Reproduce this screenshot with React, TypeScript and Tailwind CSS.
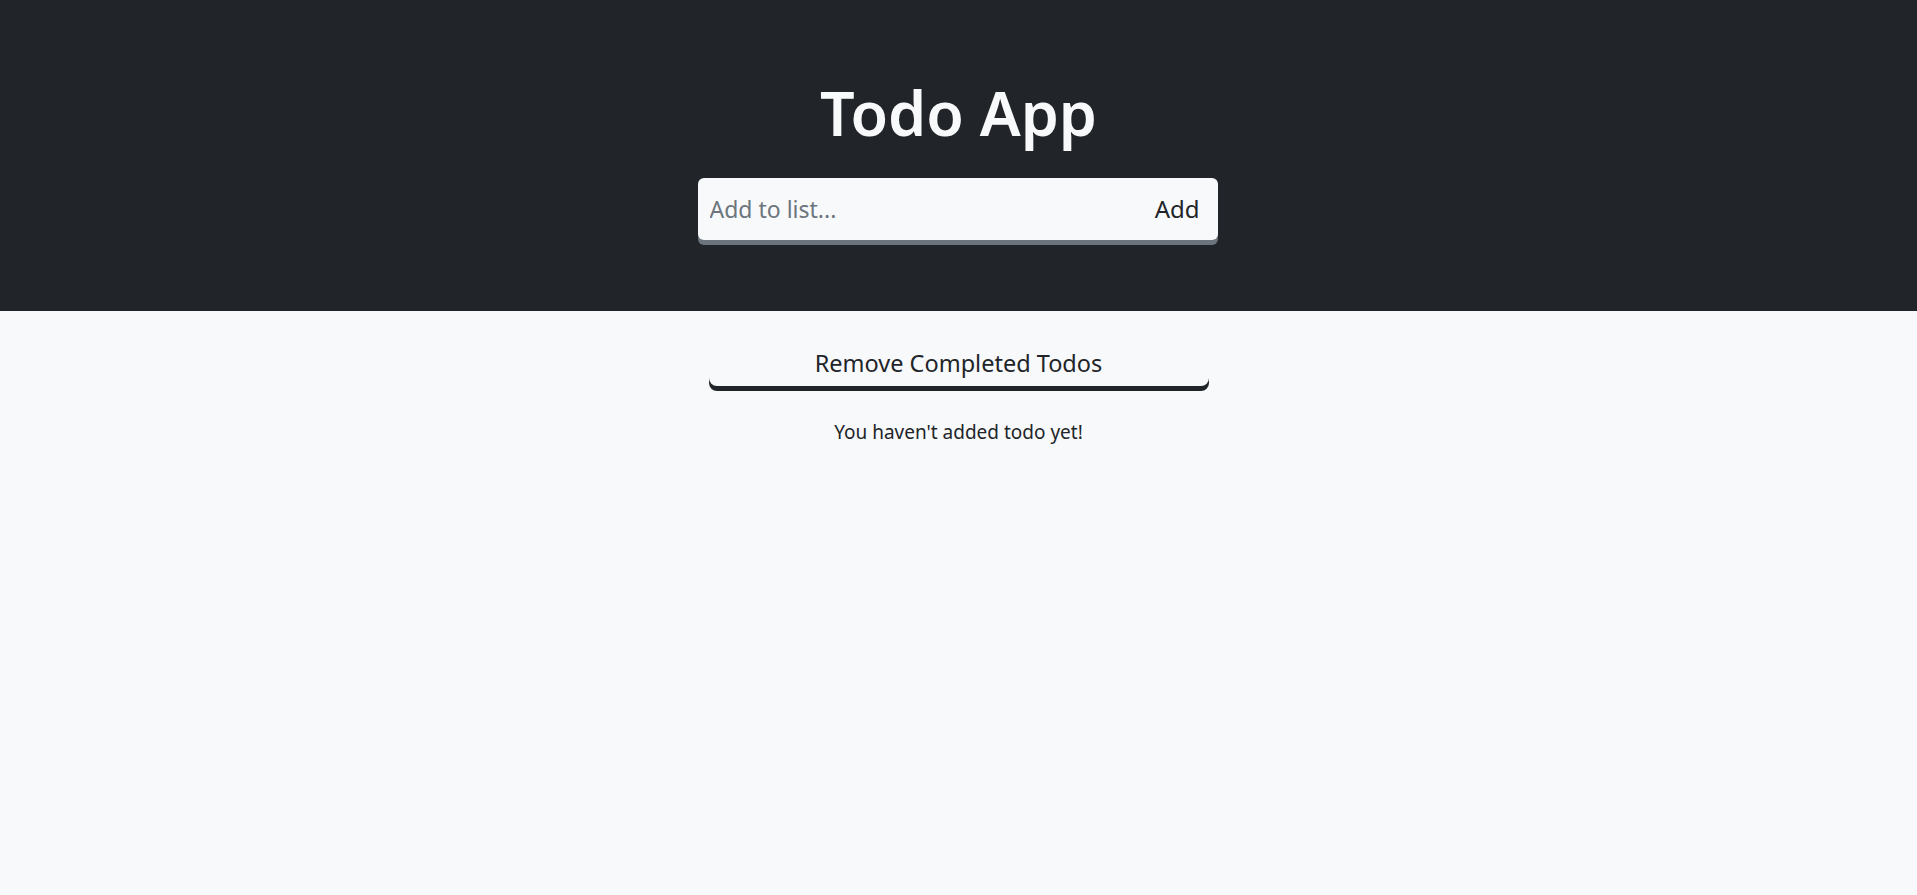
export default function App() {
  return (
    <div
      className="min-h-screen flex flex-col bg-[#f8f9fa] text-[#212529]"
      style={{ fontFamily: '"Noto Sans", "Open Sans", sans-serif' }}
    >
      {/* Header */}
      <header className="bg-[#212529] pt-[78px] pb-[71px] flex flex-col items-center">
        <h1 className="text-[61px] leading-[70px] font-semibold text-[#f8f9fa] mb-[30px]">
          Todo App
        </h1>
        <form
          className="w-[520px] h-[62px] flex items-center bg-[#f8f9fa] rounded-md shadow-[0_5px_0_#6c757d] -translate-x-[1px]"
          onSubmit={(e) => e.preventDefault()}
        >
          <input
            type="text"
            placeholder="Add to list..."
            className="flex-1 h-full bg-transparent px-3 text-[23px] text-[#212529] placeholder:text-[#6c757d] outline-none"
          />
          <button type="submit" className="h-full pr-[18px] pl-3 text-[24px] text-[#212529]">
            Add
          </button>
        </form>
      </header>

      {/* Main */}
      <main className="flex flex-col items-center pt-[30px]">
        <button className="w-[500px] h-[45px] rounded-lg bg-transparent text-[23.5px] text-[#212529] shadow-[0_5px_0_#212529]">
          Remove Completed Todos
        </button>
        <p className="mt-[32px] text-[19px] leading-[28px] text-[#212529]">
          You haven't added todo yet!
        </p>
      </main>
    </div>
  );
}
